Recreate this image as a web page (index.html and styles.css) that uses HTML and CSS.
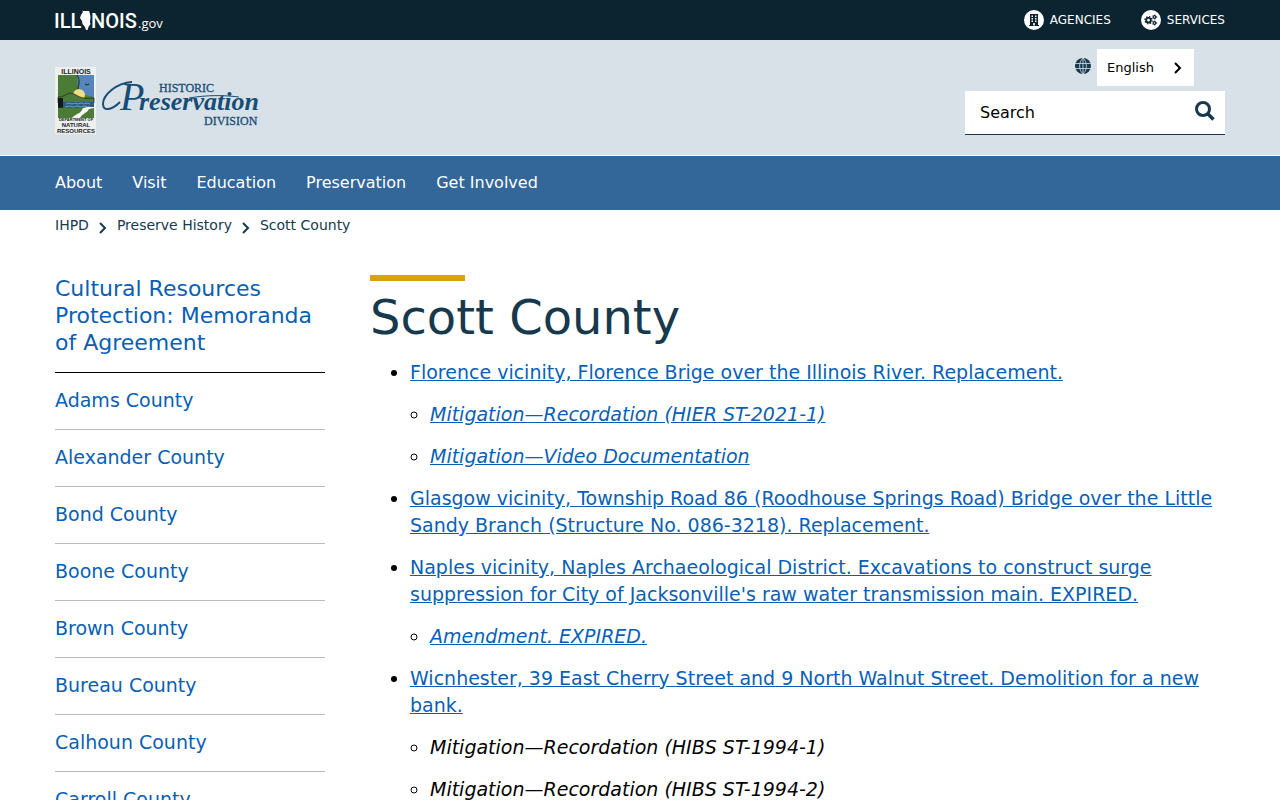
FILE: index.html
```html
<!doctype html>
<html lang="en">

<head>
    <meta charset="utf-8">
    <meta name="viewport" content="width=device-width, initial-scale=1">
    <title>Scott County</title>
    <link rel="stylesheet" href="styles.css">
</head>

<body>
    <div class="state-bar">
        <div class="container state-inner">
            <a class="state-logo" href="#">
                <svg width="110" height="24" viewBox="0 0 110 24" role="img" aria-label="Illinois.gov">
                    <g class="state-name">
                        <text x="-1" y="20">ILL</text>
                        <text x="36" y="20">NOIS</text>
                    </g>
                    <path d="M28 3h6l1 3 .5 3-.5 5 .5 2-2 3-1 3-1.500 0-1-3-2.500-3-.5-3-2-3 1-3 2-3-1-2z" fill="#fff" />
                    <text class="state-gov" x="83" y="20">.gov</text>
                </svg>
            </a>
            <div class="state-links">
                <a href="#">
                    <svg width="20" height="20" viewBox="0 0 20 20" aria-hidden="true">
                        <circle cx="10" cy="10" r="10" fill="#fff" />
                        <path d="M6 4h8v11h1v1H5v-1h1z" fill="#0c2330" />
                        <path d="M7.500 5.500H9V7H7.500zM11 5.500h1.500V7H11zM7.500 8H9v1.500H7.500zM11 8h1.500v1.500H11zM7.500 10.500H9V12H7.500zM11 10.500h1.500V12H11zM9.200 13h1.600v2.500H9.200z" fill="#fff" />
                    </svg>
                    AGENCIES
                </a>
                <a href="#">
                    <svg width="20" height="20" viewBox="0 0 20 20" aria-hidden="true">
                        <circle cx="10" cy="10" r="10" fill="#fff" />
                        <g fill="none" stroke="#0c2330">
                            <circle cx="7.500" cy="10.200" r="2.300" stroke-width="1.800" />
                            <circle cx="7.500" cy="10.200" r="3.600" stroke-width="1.200" stroke-dasharray="1.400 1.427" />
                            <circle cx="13.500" cy="7" r="1.300" stroke-width="1.200" />
                            <circle cx="13.500" cy="7" r="2.200" stroke-width=".8" stroke-dasharray="1 1.300" />
                            <circle cx="13.500" cy="13" r="1.300" stroke-width="1.200" />
                            <circle cx="13.500" cy="13" r="2.200" stroke-width=".8" stroke-dasharray="1 1.300" />
                        </g>
                    </svg>
                    SERVICES
                </a>
            </div>
        </div>
    </div>

    <header class="site-header">
        <div class="container header-inner">
            <a class="site-logo" href="#">
                <svg width="210" height="68" viewBox="0 0 210 68" role="img" aria-label="Illinois Historic Preservation Division">
                    <rect width="41" height="67" fill="#eef0f0" />
                    <text class="badge-top" x="21" y="7">ILLINOIS</text>
                    <rect x="3" y="8" width="36" height="43" fill="#4c7b36" />
                    <path d="M22 8h17v22l-10-2-6-6z" fill="#5585bb" />
                    <path d="M22 8c4 6 1 11 1 14l6 4" fill="none" stroke="#17261c" />
                    <path d="M30 17l2 1 2-1" fill="none" stroke="#17261c" />
                    <circle cx="24" cy="28" r="6" fill="#f1dc82" />
                    <path d="M3 30c7 0 9-4 13-4 6 1 8 7 23 5v5H3z" fill="#4c7b36" stroke="#17261c" stroke-width=".7" />
                    <path d="M8 35h31v8H8z" fill="#285c86" />
                    <path d="M11 37l3-1 3 1 3-1 3 1 3-1 3 1 3-1 3 1M10 40l4-1 4 1 4-1 4 1 4-1 5 1" fill="none" stroke="#6c9dbd" />
                    <path d="M3 31h5v10H3z" fill="#101916" />
                    <path d="M3 41c11-1 16 2 25-1l11 1v10H3z" fill="#4c7b36" />
                    <path d="M39 40c-8 0-11 0-12 3-2 4-7 4-10 8h8c3-5 7-5 9-9l5-1z" fill="#f7f8f5" />
                    <text class="badge-dept" x="21" y="54">DEPARTMENT OF</text>
                    <text class="badge-name" x="21" y="60">NATURAL</text>
                    <text class="badge-name" x="21" y="66">RESOURCES</text>
                    <text class="logo-caps" x="104" y="25">HISTORIC</text>
                    <text class="logo-initial" x="65" y="43">P</text>
                    <text class="logo-script" x="84" y="43">reservation</text>
                    <path d="M77 15C61 16 48 28 48 37c0 8 9 6 17-2" fill="none" stroke="#164d76" stroke-width="2" />
                    <path d="M134 31c18-3 34-3 50-1" fill="none" stroke="#164d76" />
                    <text class="logo-caps" x="149" y="58">DIVISION</text>
                </svg>
            </a>
            <div class="header-tools">
                <div class="language">
                    <svg width="16" height="16" viewBox="0 0 16 16" aria-hidden="true">
                        <circle cx="8" cy="8" r="8" fill="#17394d" />
                        <path d="M0 5.500h16M0 10.500h16M8 0v16M8 0C3.500 4 3.500 12 8 16M8 0c4.500 4 4.500 12 0 16" fill="none" stroke="#d9e1e8" stroke-width=".8" />
                    </svg>
                    <div class="language-box">
                        <select aria-label="Language">
                            <option>English</option>
                        </select>
                        <svg width="8" height="12" viewBox="0 0 8 12" aria-hidden="true">
                            <path d="M1 1l5 5-5 5" fill="none" stroke="#000" stroke-width="2" />
                        </svg>
                    </div>
                </div>
                <form class="search">
                    <input type="text" name="q" placeholder="Search" aria-label="Search">
                    <button type="submit" aria-label="Submit search">
                        <svg width="20" height="20" viewBox="0 0 20 20" aria-hidden="true">
                            <circle cx="8" cy="8" r="6.500" fill="none" stroke="#17394d" stroke-width="3" />
                            <path d="M13 13l5.500 5.500" stroke="#17394d" stroke-width="3.500" />
                        </svg>
                    </button>
                </form>
            </div>
        </div>
    </header>

    <nav class="main-nav" aria-label="Main">
        <div class="container nav-inner">
            <a href="#">About</a>
            <a href="#">Visit</a>
            <a href="#">Education</a>
            <a href="#">Preservation</a>
            <a href="#">Get Involved</a>
        </div>
    </nav>

    <nav class="container breadcrumb" aria-label="Breadcrumb">
        <a href="#">IHPD</a>
        <svg width="8" height="12" viewBox="0 0 8 12" aria-hidden="true">
            <path d="M1 1l5 5-5 5" fill="none" stroke="#17394d" stroke-width="2" />
        </svg>
        <a href="#">Preserve History</a>
        <svg width="8" height="12" viewBox="0 0 8 12" aria-hidden="true">
            <path d="M1 1l5 5-5 5" fill="none" stroke="#17394d" stroke-width="2" />
        </svg>
        <span>Scott County</span>
    </nav>

    <div class="container page">
        <aside class="sidebar">
            <h2><a href="#">Cultural Resources Protection: Memoranda of Agreement</a></h2>
            <ul>
                <li><a href="#">Adams County</a></li>
                <li><a href="#">Alexander County</a></li>
                <li><a href="#">Bond County</a></li>
                <li><a href="#">Boone County</a></li>
                <li><a href="#">Brown County</a></li>
                <li><a href="#">Bureau County</a></li>
                <li><a href="#">Calhoun County</a></li>
                <li><a href="#">Carroll County</a></li>
            </ul>
        </aside>
        <main class="content">
            <h1>Scott County</h1>
            <ul>
                <li><a href="#">Florence vicinity, Florence Brige over the Illinois River. Replacement.</a>
                    <ul>
                        <li><a href="#">Mitigation—Recordation (HIER ST-2021-1)</a></li>
                        <li><a href="#">Mitigation—Video Documentation</a></li>
                    </ul>
                </li>
                <li><a href="#">Glasgow vicinity, Township Road 86 (Roodhouse Springs Road) Bridge over the Little Sandy Branch (Structure No. 086-3218). Replacement.</a></li>
                <li><a href="#">Naples vicinity, Naples Archaeological District. Excavations to construct surge suppression for City of Jacksonville's raw water transmission main. EXPIRED.</a>
                    <ul>
                        <li><a href="#">Amendment. EXPIRED.</a></li>
                    </ul>
                </li>
                <li><a href="#">Wicnhester, 39 East Cherry Street and 9 North Walnut Street. Demolition for a new bank.</a>
                    <ul>
                        <li>Mitigation—Recordation (HIBS ST-1994-1)</li>
                        <li>Mitigation—Recordation (HIBS ST-1994-2)</li>
                    </ul>
                </li>
            </ul>
        </main>
    </div>
</body>

</html>
```
FILE: styles.css
```css
* {
    box-sizing: border-box;
}

body {
    margin: 0;
    font-family: "DejaVu Sans", sans-serif;
    font-size: 19px;
    line-height: 27px;
    color: #000;
}

a {
    color: #0a5fb4;
}

svg {
    display: block;
    flex: none;
    overflow: visible;
}

.container {
    width: 100%;
    max-width: 1200px;
    margin: 0 auto;
    padding: 0 15px;
}

/* state bar */
.state-bar {
    background-color: #0c2330;
}

.state-inner,
.header-inner {
    display: flex;
    justify-content: space-between;
}

.state-inner {
    align-items: center;
    min-height: 40px;
}

.state-name {
    font: 500 20px Roboto, "Liberation Sans", sans-serif;
    fill: #fff;
}

.state-gov {
    font: 13px "Open Sans", sans-serif;
    fill: #fff;
}

.state-links {
    display: flex;
    gap: 30px;
}

.state-links a {
    display: flex;
    align-items: center;
    gap: 6px;
    color: #fff;
    font-size: 12px;
    text-decoration: none;
}

/* header */
.site-header {
    background-color: #d9e1e8;
    border-bottom: 1px solid #fff;
}

.header-inner {
    padding-top: 9px;
    padding-bottom: 20px;
}

.site-logo {
    padding-top: 18px;
}

.badge-top,
.badge-name {
    font: bold 6px "Liberation Sans", sans-serif;
    text-anchor: middle;
    fill: #222;
}

.badge-top {
    font-size: 7px;
}

.badge-dept {
    font: bold 4px "Liberation Sans", sans-serif;
    text-anchor: middle;
    fill: #222;
}

.logo-caps {
    font: 12px "Liberation Serif", serif;
    fill: #164d76;
    stroke: #164d76;
    stroke-width: .3px;
}

.logo-script {
    font: italic bold 26px "Liberation Serif", serif;
    fill: #164d76;
}

.logo-initial {
    font: italic 40px "Liberation Serif", serif;
    fill: #164d76;
}

.header-tools {
    width: 260px;
}

.language {
    display: flex;
    justify-content: flex-end;
    gap: 6px;
    margin-bottom: 5px;
    padding-right: 31px;
}

.language > svg {
    margin-top: 9px;
}

.language-box {
    display: grid;
    align-items: center;
    width: 97px;
    background-color: #fff;
}

.language-box > * {
    grid-area: 1 / 1;
}

.language-box select {
    height: 37px;
    padding: 0 10px;
    border: none;
    background: none;
    appearance: none;
    font: 13px "DejaVu Sans", sans-serif;
    color: #000;
}

.language-box svg {
    justify-self: end;
    margin-right: 12px;
    pointer-events: none;
}

.search {
    display: flex;
    height: 44px;
    background-color: #fff;
    border-bottom: 1px solid #17394d;
}

.search input {
    flex: 1;
    min-width: 0;
    padding: 0 15px;
    border: none;
    background: none;
    font: 16px "DejaVu Sans", sans-serif;
}

.search input::placeholder {
    color: #000;
    opacity: 1;
}

.search button {
    padding: 0 10px 4px;
    border: none;
    background: none;
    cursor: pointer;
}

/* navigation */
.main-nav {
    background-color: #336699;
}

.nav-inner {
    display: flex;
    gap: 30px;
}

.nav-inner a {
    padding: 13px 0 14px;
    color: #fff;
    font-size: 16px;
    text-decoration: none;
}

.breadcrumb {
    display: flex;
    align-items: center;
    gap: 10px;
    padding-top: 2px;
    font-size: 14px;
    color: #17394d;
}

.breadcrumb a {
    color: #17394d;
    text-decoration: none;
}

.breadcrumb svg {
    margin-top: 4px;
}

/* page */
.page {
    display: flex;
    gap: 45px;
    padding-top: 36px;
}

.sidebar {
    flex: none;
    width: 270px;
}

.sidebar h2 {
    margin: 0;
    padding-bottom: 16px;
    border-bottom: 1px solid #000;
    font-size: 22px;
    font-weight: normal;
}

.sidebar a {
    text-decoration: none;
}

.sidebar ul {
    margin: 0;
    padding: 0;
    list-style: none;
}

.sidebar li {
    padding: 14px 0 15px;
    border-bottom: 1px solid #bbb;
}

.content {
    flex: 1;
    min-width: 0;
}

.content h1 {
    margin: 0 0 10px;
    color: #17394d;
    font-size: 48px;
    font-weight: normal;
    line-height: 64px;
}

.content h1::before {
    content: "";
    display: block;
    width: 95px;
    height: 6px;
    margin-bottom: 4px;
    background-color: #e09f10;
}

.content ul {
    margin: 0;
    padding-left: 40px;
}

.content li {
    margin-bottom: 15px;
}

.content ul ul {
    margin-top: 15px;
    padding-left: 20px;
    font-style: italic;
}
```
